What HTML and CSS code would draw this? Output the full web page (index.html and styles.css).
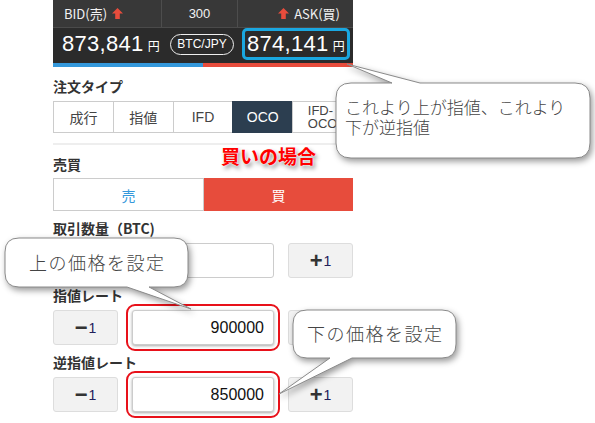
FILE: index.html
```html
<!DOCTYPE html>
<html lang="ja">
<head>
    <meta charset="UTF-8">
    <title>OCO注文</title>
    <link rel="stylesheet" href="styles.css">
</head>
<body>
<div class="page">

    <div class="panel">
        <!-- rate board -->
        <div class="board">
            <div class="board-head">
                <div class="cell bid-h">BID(売)
                    <svg class="up" viewBox="0 0 12 12"><path d="M6 0 L12 6 H8.5 V12 H3.5 V6 H0 Z"/></svg>
                </div>
                <div class="cell spread">300</div>
                <div class="cell ask-h">
                    <svg class="up" viewBox="0 0 12 12"><path d="M6 0 L12 6 H8.5 V12 H3.5 V6 H0 Z"/></svg>
                    ASK(買)</div>
            </div>
            <div class="board-values">
                <div class="price bid">873,841<span class="yen">円</span></div>
                <div class="pair-wrap"><span class="pair">BTC/JPY</span></div>
                <div class="price ask">874,141<span class="yen">円</span></div>
            </div>
            <div class="stripe"><span class="s-blue"></span><span class="s-red"></span></div>
        </div>

        <!-- order type -->
        <div class="label">注文タイプ</div>
        <div class="tabs">
            <div class="tab">成行</div>
            <div class="tab">指値</div>
            <div class="tab">IFD</div>
            <div class="tab active">OCO</div>
            <div class="tab small">IFD-<br>OCO</div>
        </div>
        <div class="sep"></div>

        <!-- buy / sell -->
        <div class="label">売買</div>
        <div class="side">
            <div class="side-btn sell">売</div>
            <div class="side-btn buy">買</div>
        </div>

        <div class="field">
            <div class="label">取引数量（BTC)</div>
            <div class="row">
                <div class="step"><b>−</b>1</div>
                <input class="num" type="text" value="">
                <div class="step"><b>+</b>1</div>
            </div>
        </div>

        <div class="field">
            <div class="label">指値レート</div>
            <div class="row">
                <div class="step"><b>−</b>1</div>
                <input class="num mark" type="text" value="900000">
                <div class="step"><b>+</b>1</div>
            </div>
        </div>

        <div class="field">
            <div class="label">逆指値レート</div>
            <div class="row">
                <div class="step"><b>−</b>1</div>
                <input class="num mark" type="text" value="850000">
                <div class="step"><b>+</b>1</div>
            </div>
        </div>
    </div>

    <!-- annotations -->
    <div class="ask-mark"></div>
    <div class="buy-note">買いの場合</div>

    <svg class="bubbles" width="595" height="423" viewBox="0 0 595 423">
        <path d="M351 83 L392 83 L347 64 L420 83 L575 83 Q590 83 590 98 L590 143 Q590 158 575 158 L351 158 Q336 158 336 143 L336 98 Q336 83 351 83 Z"/>
        <path d="M19 238 L174 238 Q188 238 188 252 L188 273 Q188 287 174 287 L149 287 L191 309 L127 287 L19 287 Q5 287 5 273 L5 252 Q5 238 19 238 Z"/>
        <path d="M307 310 L442 310 Q456 310 456 324 L456 344 Q456 358 442 358 L352 358 L279 394 L330 358 L307 358 Q293 358 293 344 L293 324 Q293 310 307 310 Z"/>
    </svg>
    <div class="bubble-text b1">これより上が指値、これより<br>下が逆指値</div>
    <div class="bubble-text b2">上の価格を設定</div>
    <div class="bubble-text b3">下の価格を設定</div>

</div>
</body>
</html>
```

FILE: styles.css
```css
body {
    margin: 0;
    background: #fff;
    font-family: "Noto Sans CJK JP", "Liberation Sans", sans-serif;
    color: #333;
}

.page {
    position: relative;
    width: 595px;
    height: 423px;
    overflow: hidden;
}

.panel {
    width: 300px;
    margin-left: 53px;
}

/* rate board */
.board-head,
.board-values {
    display: grid;
    grid-template-columns: 109px 76px 1fr;
}

.board-head {
    height: 28px;
    background: #383838;
    border-bottom: 1px solid #4a4a4a;
    box-sizing: border-box;
    color: #f2f2f2;
    font-size: 13px;
}

.cell {
    display: flex;
    align-items: center;
    gap: 5px;
    border-right: 1px solid #4d4d4d;
}

.cell:last-child {
    border-right: none;
}

.bid-h {
    padding-left: 11px;
}

.spread {
    justify-content: center;
    font-family: "Liberation Sans", sans-serif;
}

.ask-h {
    justify-content: flex-end;
    padding-right: 13px;
}

.up {
    width: 11px;
    height: 11px;
    fill: #e74c3c;
}

.board-values {
    height: 35px;
    background: #2b2b2b;
    color: #fff;
}

.price {
    font-family: "Liberation Sans", sans-serif;
    font-size: 22px;
    line-height: 32px;
    letter-spacing: 0.3px;
}

.bid {
    padding-left: 9px;
}

.ask {
    padding-left: 9px;
}

.yen {
    font-family: "Noto Sans CJK JP", sans-serif;
    font-size: 12px;
    margin-left: 4px;
}

.pair-wrap {
    display: flex;
    align-items: center;
    justify-content: center;
    padding-left: 4px;
    height: 32px;
}

.pair {
    border: 1.5px solid #eee;
    border-radius: 12px;
    padding: 0 6px;
    font-family: "Liberation Sans", sans-serif;
    font-size: 12px;
    line-height: 19px;
}

.stripe {
    display: flex;
    height: 4px;
}

.s-blue,
.s-red {
    flex: 1;
}

.s-blue {
    background: #3498db;
}

.s-red {
    background: #e74c3c;
}

/* form */
.label {
    margin-top: 9px;
    font-size: 14px;
    font-weight: bold;
    line-height: 20px;
    color: #333;
}

.tabs {
    display: flex;
    margin-top: 5px;
    height: 32px;
}

.tab {
    flex: 1;
    display: flex;
    align-items: center;
    justify-content: center;
    border: 1px solid #ccc;
    border-right: none;
    font-size: 14px;
    color: #444;
    font-family: "Liberation Sans", "Noto Sans CJK JP", sans-serif;
}

.tab:last-child {
    border-right: 1px solid #ccc;
}

.tab.active {
    background: #2c3e50;
    border-color: #2c3e50;
    color: #fff;
}

.tab.small {
    font-size: 13px;
    line-height: 13px;
}

.sep {
    margin-top: 10px;
    height: 2px;
    background: #eee;
}

.side {
    display: flex;
    margin-top: 4px;
    margin-bottom: 7px;
    height: 33px;
}

.side-btn {
    flex: 1;
    display: flex;
    align-items: center;
    justify-content: center;
    font-size: 14px;
}

.sell {
    border: 1px solid #ccc;
    color: #3498db;
}

.buy {
    background: #e74c3c;
    color: #fff;
}

.field .label {
    margin-top: 7px;
}

.row {
    display: grid;
    grid-template-columns: 65px 1fr 65px;
    gap: 14px;
    margin-top: 5px;
    height: 35px;
}

.step {
    display: flex;
    align-items: center;
    justify-content: center;
    gap: 1px;
    background: #f2f2f2;
    border: 1px solid #ddd;
    border-radius: 3px;
    font-family: "Liberation Sans", sans-serif;
    font-size: 14px;
    color: #22205a;
}

.step b {
    font-size: 22px;
    line-height: 20px;
    color: #333;
}

.num {
    box-sizing: border-box;
    width: 100%;
    height: 35px;
    border: 1px solid #ccc;
    border-radius: 3px;
    padding: 0 9px 0 0;
    text-align: right;
    font-family: "Liberation Sans", sans-serif;
    font-size: 16px;
    color: #111;
    background: #fff;
}

.num.mark {
    outline: 2px solid #e8111a;
    outline-offset: 4px;
    box-shadow: 0 1px 3px rgba(0, 0, 0, 0.35);
}

/* annotations */
.ask-mark {
    position: absolute;
    left: 242px;
    top: 28px;
    width: 108px;
    height: 32px;
    box-sizing: border-box;
    border: 3px solid #1aa7e0;
    border-radius: 5px;
}

.buy-note {
    position: absolute;
    left: 221px;
    top: 144px;
    font-size: 19px;
    font-weight: bold;
    line-height: 24px;
    color: #f00;
    text-shadow: 0 0 1px #fff, 0 0 2px #fff, 2px 3px 4px rgba(0, 0, 0, 0.45);
}

.bubbles {
    position: absolute;
    left: 0;
    top: 0;
}

.bubbles path {
    fill: #fff;
    stroke: #8a8a8a;
    stroke-width: 1;
    filter: drop-shadow(2px 3px 3px rgba(0, 0, 0, 0.4));
}

.bubble-text {
    position: absolute;
    font-weight: 300;
    color: #444;
    white-space: nowrap;
}

.b1 {
    left: 345px;
    top: 97px;
    font-size: 17px;
    line-height: 20px;
}

.b2 {
    left: 29px;
    top: 250px;
    font-size: 18px;
    line-height: 24px;
    letter-spacing: 1.5px;
}

.b3 {
    left: 307px;
    top: 321px;
    font-size: 18px;
    line-height: 24px;
    letter-spacing: 1.5px;
}
```
